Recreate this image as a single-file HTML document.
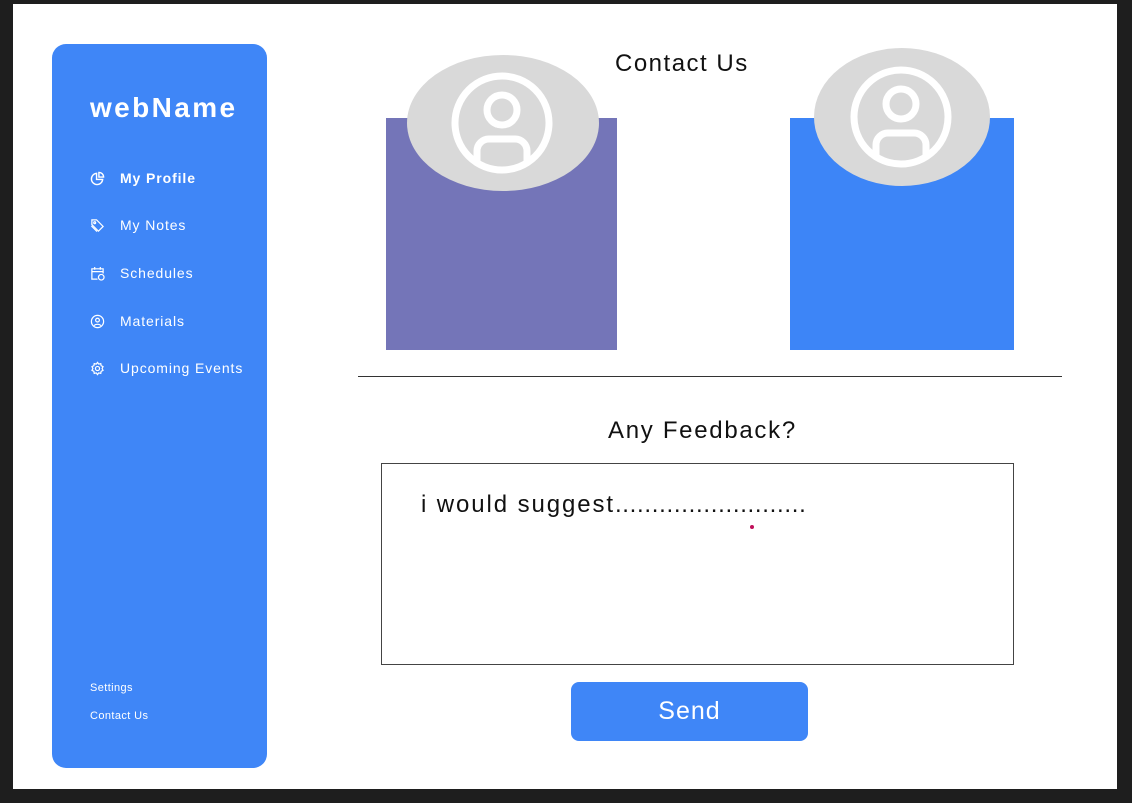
<!DOCTYPE html>
<html><head><style>
*{margin:0;padding:0;box-sizing:border-box}
body{width:1132px;height:803px;background:#1e1e1e;position:relative;overflow:hidden;font-family:"Liberation Sans",sans-serif}
.page{position:absolute;left:13px;top:4px;width:1104px;height:785px;background:#fff}
.side{position:absolute;left:52px;top:44px;width:215px;height:724px;background:#3f86f7;border-radius:14px;color:#fff}
.logo{position:absolute;left:38px;top:48px;font-size:28px;font-weight:bold;letter-spacing:2.4px}
.nav{position:absolute;left:38px;font-size:14px;display:flex;align-items:center;gap:15px;letter-spacing:0.9px}
.nav svg{width:15px;height:15px}
.small{position:absolute;left:38px;font-size:11px;letter-spacing:0.4px}
.abs{position:absolute}
</style></head><body>
<div class="page"></div>
<div class="side">
<div class="logo">webName</div>
<div class="nav" style="top:126px;font-weight:bold"><svg viewBox="0 0 16 16" fill="none" stroke="#fff" stroke-width="1.5"><path d="M7 2.5A6 6 0 1 0 13.5 9H7Z"/><path d="M9.5 1.5V6.5H14.5A5 5 0 0 0 9.5 1.5Z"/></svg>My Profile</div>
<div class="nav" style="top:173px"><svg viewBox="0 0 16 16" fill="none" stroke="#fff" stroke-width="1.3"><path d="M2 2h5l7 7-5 5-7-7z"/><circle cx="5" cy="5" r="1"/><path d="M1.5 8.5l6 6"/></svg>My Notes</div>
<div class="nav" style="top:221px"><svg viewBox="0 0 16 16" fill="none" stroke="#fff" stroke-width="1.3"><path d="M8 14H2V3h12v5M2 6h12M5 1v3M11 1v3"/><circle cx="12" cy="12" r="3"/></svg>Schedules</div>
<div class="nav" style="top:269px"><svg viewBox="0 0 16 16" fill="none" stroke="#fff" stroke-width="1.3"><circle cx="8" cy="8" r="6.5"/><circle cx="8" cy="6.5" r="2"/><path d="M4.5 12.5c1-2 6-2 7 0"/></svg>Materials</div>
<div class="nav" style="top:316px"><svg viewBox="0 0 16 16" fill="none" stroke="#fff" stroke-width="1.3"><circle cx="8" cy="8" r="2.2"/><path d="M8 1.5l1.3 1.8 2.2-.5.4 2.2 2 1-1 2 1 2-2 1-.4 2.2-2.2-.5L8 14.5l-1.3-1.8-2.2.5-.4-2.2-2-1 1-2-1-2 2-1 .4-2.2 2.2.5z"/></svg>Upcoming Events</div>
<div class="small" style="top:638px">Settings</div>
<div class="small" style="top:666px">Contact Us</div>
</div>
<div class="abs" style="left:615px;top:50px;font-size:24px;color:#111;letter-spacing:1.5px">Contact Us</div>
<div class="abs" style="left:386px;top:118px;width:231px;height:232px;background:#7475b8"></div>
<div class="abs" style="left:790px;top:118px;width:224px;height:232px;background:#3d85f7"></div>
<svg class="abs" style="left:0;top:0" width="1132" height="400">
<ellipse cx="503" cy="123" rx="96" ry="68" fill="#d9d9d9"/>
<circle cx="502" cy="123" r="47" fill="none" stroke="#fff" stroke-width="7"/>
<circle cx="502" cy="110" r="15" fill="none" stroke="#fff" stroke-width="7"/>
<path d="M477 162v-11a12 12 0 0 1 12-12h26a12 12 0 0 1 12 12v11" fill="none" stroke="#fff" stroke-width="7"/>
<ellipse cx="902" cy="117" rx="88" ry="69" fill="#d9d9d9"/>
<circle cx="901" cy="117" r="47" fill="none" stroke="#fff" stroke-width="7"/>
<circle cx="901" cy="104" r="15" fill="none" stroke="#fff" stroke-width="7"/>
<path d="M876 156v-11a12 12 0 0 1 12-12h26a12 12 0 0 1 12 12v11" fill="none" stroke="#fff" stroke-width="7"/>
<line x1="358" y1="376.5" x2="1062" y2="376.5" stroke="#333" stroke-width="1"/>
</svg>
<div class="abs" style="left:608px;top:417px;font-size:24px;color:#111;letter-spacing:1.7px">Any Feedback?</div>
<div class="abs" style="left:381px;top:463px;width:633px;height:202px;border:1px solid #444"></div>
<div class="abs" style="left:421px;top:491px;font-size:24px;color:#111"><span style="letter-spacing:1.9px">i would suggest</span><span style="letter-spacing:0.7px">..........................</span></div>
<div class="abs" style="left:750px;top:525px;width:4px;height:4px;border-radius:2px;background:#c0105a"></div>
<div class="abs" style="left:571px;top:682px;width:237px;height:59px;background:#3f86f7;border-radius:8px;color:#fff;font-size:25px;text-align:center;line-height:59px;letter-spacing:1px">Send</div>
</body></html>
